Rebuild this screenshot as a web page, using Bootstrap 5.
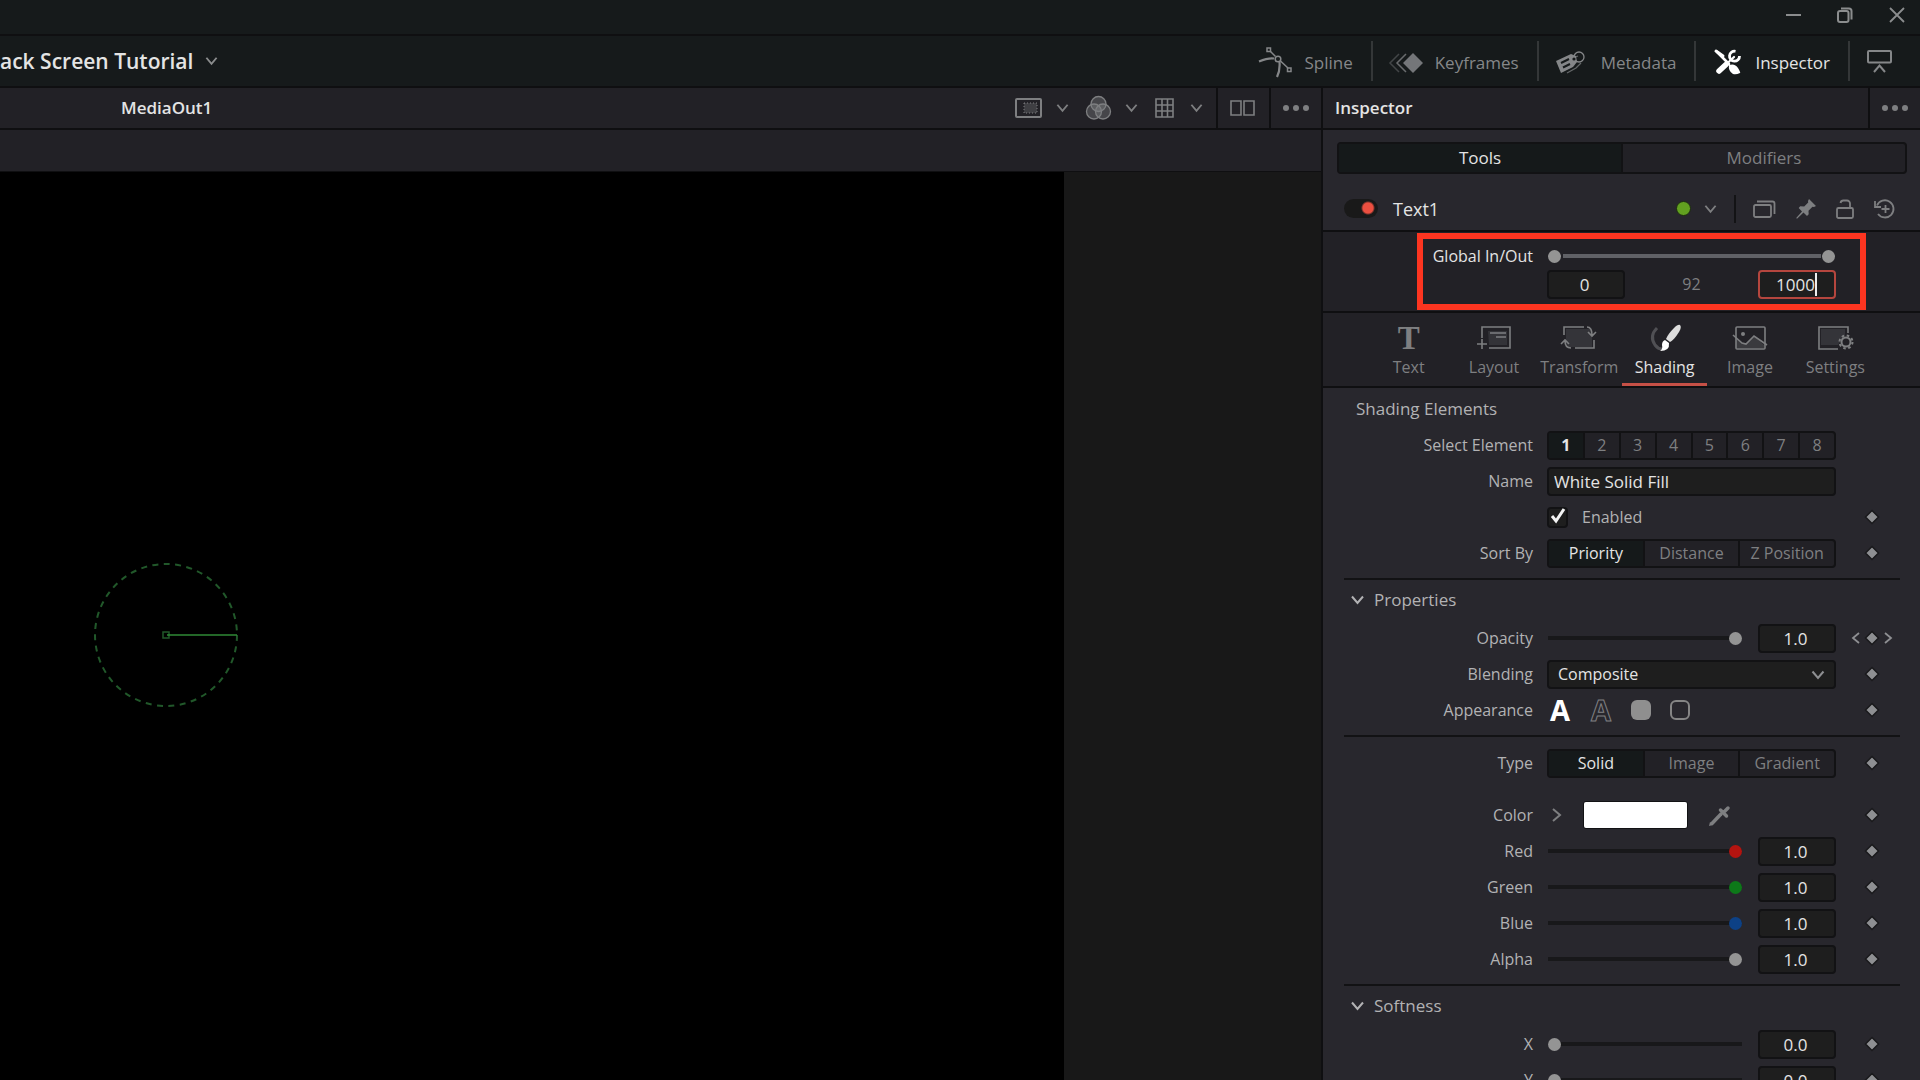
<!DOCTYPE html>
<html lang="en" data-bs-theme="dark">
<head>
<meta charset="utf-8">
<meta name="viewport" content="width=device-width, initial-scale=1">
<title>Inspector</title>
<link href="https://cdn.jsdelivr.net/npm/bootstrap@5.3.0/dist/css/bootstrap.min.css" rel="stylesheet">
<style>
:root{--top:#161a1b;--bar:#222126;--panel:#28272d;--rule:#0f0f11;--field:#1e1e1e;--muted:#7e7f81;--label:#b2b2b4;--bright:#e4e4e4;--accent:#c65046}
body{font-family:"Open Sans","Noto Sans",sans-serif;font-size:16px;line-height:24px;color:var(--label);background:var(--top);letter-spacing:normal}
button{font:inherit;color:inherit;background:none;border:0;padding:0}
svg{display:block;flex:none;overflow:visible}
.ico{fill:none;stroke:currentColor;stroke-width:2}
.fs17{font-size:17px}
.muted{color:var(--muted)}
.bright{color:var(--bright)}
.titlebar{height:36px;border-bottom:2px solid var(--rule);background:var(--top);padding:0 15px 5px 0;gap:36px;color:#8b8d8e}
.mainbar{height:52px;border-bottom:2px solid var(--rule);background:var(--top)}
.project{font-size:21px;font-weight:600;gap:12px}
.project svg{color:#8b8d8e}
.tool{height:40px;padding:3px 18px 0 17px;gap:12px;font-size:17px;color:#858789;border-left:2px solid #343738}
.tool:first-child{border-left:0}
.tool.wide{padding-right:28px}
.tool.current{padding-left:19px;gap:14px;color:#fff}
.panelhead{height:42px;border-bottom:2px solid var(--rule);background:var(--bar)}
.panelhead .cell{height:40px;border-left:2px solid var(--rule)}
.viewer{border-right:2px solid var(--rule)}
.caption{padding-left:121px}
.viewtools{gap:17px;padding-right:13px}
.viewtools button{gap:14px}
.split{width:53px;padding-left:12px}
.more{width:52px}
.subbar{height:42px;background:var(--bar);border-bottom:1px solid var(--rule)}
.stage{background:#181818}
.frame{width:1064px;background:#000}
.gizmo{left:90px;top:387px}
.inspector{width:597px;background:var(--panel)}
.seg{border:2px solid #121214;border-radius:4px;background:var(--bar);overflow:hidden}
.seg button{flex:1 1 0;color:var(--muted);border-left:2px solid #121214}
.seg button:first-child{border-left:0}
.seg .on{background:#15191a;color:var(--bright)}
.tabs2{height:32px;margin:12px 13px 13px 14px;font-size:17px;line-height:26px}
.node{height:43px;padding:0 25px 0 21px;font-size:18px}
.nodename{padding-left:15px}
.switch.form-check-input{width:34px;height:19px;margin:0;border:0;border-radius:10px;background:#191919 radial-gradient(circle at 24px 9px,#ec4f40 5px,#ec4f4000 7px)}
.dot{width:15px;height:15px;border-radius:50%;background:#62a020;border:1px solid #1c2b10}
.vers{margin:0 17px 0 13px}
.nodetools{gap:20px;padding-left:17px}
.vbar{width:2px;height:28px;background:#131315}
.range2{height:83px;border-top:2px solid var(--rule);border-bottom:2px solid var(--rule);background:var(--bar);padding-top:12px}
.callout{left:94px;right:54px;top:1px;bottom:1px;border:6px solid #fd3520;pointer-events:none}
.prop{display:grid;grid-template-columns:210px 289px 44px;column-gap:14px;align-items:center;height:36px}
.prop>label,.prop>.lab{text-align:right}
.prop>:nth-child(3){justify-self:center;color:#8e8f92}
.range2 .prop{height:24px}
.range2 .vals{height:28px;margin:2px 0 0 224px;width:289px}
.num{width:78px;height:29px;flex:none;background:var(--field);border:2px solid #121214;border-radius:4px;color:var(--bright);text-align:center;font-size:17px;line-height:24px;padding:0 3px 0 0}
.txt{width:100%;text-align:left;padding-left:5px}
.hot{border-color:#b5463e}
.caret{left:268px;top:3px;width:2px;height:23px;background:#eee}
.slide{-webkit-appearance:none;appearance:none;width:194px;height:14px;margin:0 0 0 1px;background:linear-gradient(#18181a,#18181a) center/100% 4px no-repeat;color:#949494}
.slide::-webkit-slider-thumb{-webkit-appearance:none;width:13px;height:13px;border-radius:50%;background:currentColor;border:0}
.duo{height:14px}
.duo .slide{width:287px;position:absolute;left:0;top:0;background:none}
.duo .slide:first-child{background:linear-gradient(#606166,#606166) center/258px 4px no-repeat}
.tabrow{height:75px;border-bottom:2px solid var(--rule);background:var(--bar);padding:0 42px 0 43px}
.tabrow button{flex:1 1 0;color:var(--muted);border-bottom:3px solid transparent;padding-top:6px}
.tabrow .pic{height:28px;margin-bottom:3px}
.tabrow .on{color:var(--bright);border-color:var(--accent)}
.serifT{font:bold 33px/24px "Liberation Serif",serif}
.group{font-size:17px;height:39px;padding-left:33px;padding-top:9px}
.fold{font-size:17px;height:40px;margin-left:27px;gap:9px}
.rule{height:2px;background:#121214;margin:7px 20px 0 21px}
.seg28{height:29px}
.tick.form-check-input{width:21px;height:21px;margin:0;border:2px solid #121214;border-radius:4px;background-color:var(--field);background-image:none}
.tickbox svg{left:4px;top:3px;color:#f4f4f4;pointer-events:none}
.tickbox label{padding-left:14px}
.pick{width:100%;height:29px;appearance:none;border:2px solid #121214;border-radius:4px;background:var(--field);color:var(--bright);padding:0 9px;line-height:24px}
.pickwrap svg{right:11px;top:10px;color:#8e8f92;pointer-events:none}
.looks{gap:19px;padding-left:2px}
.glyph{width:22px;font-size:29px;line-height:28px;font-weight:700;text-align:center;color:#fff}
.hollow{color:#28272d;-webkit-text-stroke:1px #808083}
.box{width:20px;height:20px;border-radius:6px;background:#8f8f8f}
.box.open{background:none;border:2px solid #858585}
.swatch{width:105px;height:28px;padding:0;border:1px solid #121214;border-radius:3px;background:#fff;appearance:none}
.swatch::-webkit-color-swatch-wrapper{padding:0}
.swatch::-webkit-color-swatch{border:0}
.expand{margin:0 21px 0 5px}
.dropper{margin-left:21px}
.red{color:#b31410}.green{color:#0d7819}.blue{color:#0d4186}
</style>
<script src="https://cdn.jsdelivr.net/npm/bootstrap@5.3.0/dist/js/bootstrap.bundle.min.js"></script>
</head>
<body class="vh-100 overflow-hidden d-flex flex-column">
<svg width="0" height="0" class="position-absolute">
 <symbol id="down" viewBox="0 0 14 10"><path d="M1.500 1.500 7 8l5.500-6.500" fill="none" stroke="currentColor" stroke-width="2"/></symbol>
 <symbol id="dia" viewBox="0 0 16 16"><path d="M8 1.500 14.500 8 8 14.500 1.500 8z" fill="currentColor" stroke="#19191b" stroke-width="1.500"/></symbol>
 <symbol id="dots" viewBox="0 0 26 6"><g fill="currentColor"><circle cx="3" cy="3" r="3"/><circle cx="13" cy="3" r="3"/><circle cx="23" cy="3" r="3"/></g></symbol>
</svg>

<div class="titlebar d-flex justify-content-end align-items-center flex-shrink-0">
 <button aria-label="Minimize"><svg class="ico" width="15" height="16"><path d="M0 8h15"/></svg></button>
 <button aria-label="Restore"><svg class="ico" width="16" height="16"><rect x="1" y="4" width="10.500" height="11" rx="2"/><path d="M4 1.500h8a2.500 2.500 0 0 1 2.500 2.500v8.500"/></svg></button>
 <button aria-label="Close"><svg class="ico" width="16" height="16"><path d="M1 1l14 14M15 1 1 15" stroke-width="1.800"/></svg></button>
</div>

<header class="mainbar d-flex justify-content-between align-items-center flex-shrink-0">
 <button class="project bright d-flex align-items-center"><span>ack Screen Tutorial</span><svg width="13" height="10"><use href="#down"/></svg></button>
 <nav class="d-flex align-items-center">
  <button class="tool d-flex align-items-center"><svg class="ico" width="34" height="32"><g stroke-width="1.500"><path d="M1 14.500C7 12 12 11 16 11.500M21.500 15C22 21 21.500 25 19 30" stroke-width="2.200"/><path d="M12 4l5.500 5.500M22.500 14 30 21"/><circle cx="20" cy="12" r="2.800"/><rect x="9" y="1" width="3.500" height="3.500"/><rect x="29.500" y="21" width="3.500" height="3.500"/></g></svg>Spline</button>
  <button class="tool d-flex align-items-center ps-3"><svg width="34" height="22"><g fill="none" stroke="currentColor" stroke-width="1.500"><path d="M10 2 1 11l9 9" opacity=".4"/><path d="M17 2 8 11l9 9" opacity=".75"/></g><path d="M24 1 34 11 24 21 14 11z" fill="currentColor" opacity=".85"/></svg>Keyframes</button>
  <button class="tool d-flex align-items-center"><svg width="29" height="24"><path d="M0 10 15 3l5 2 1 6-4 5-12 6z" fill="currentColor"/><path d="M5 12l8-4M7 16.500l7-3.500" stroke="#161a1b" stroke-width="2"/><g fill="none" stroke="currentColor" stroke-width="1.300"><circle cx="23" cy="6" r="5"/><path d="M11 22l9-5 5-5M17 7l5-2" opacity=".7"/></g><circle cx="18" cy="8" r="1.600" fill="#161a1b"/></svg><span class="ps-1">Metadata</span></button>
  <button class="tool current d-flex align-items-center" aria-pressed="true"><svg width="26" height="25"><g fill="none" stroke="#fff" stroke-linecap="round"><path d="M2 2 14 14" stroke-width="2.600"/><path d="M1 1l7 5" stroke-width="3"/><path d="M4 21 11 14.500" stroke-width="5.500"/><path d="M11 14.500 19 7" stroke-width="2.200"/><path d="M20.500 1.300a5 5 0 1 0 4 4.700" stroke-width="2.800" stroke-linecap="butt"/></g><path d="M14 15q6-2 9 3t2 5q-4 2-7 1-5-3-4-9z" fill="#fff"/></svg><span class="bright">Inspector</span></button>
  <button class="tool wide d-flex align-items-center" aria-label="Expand panel"><svg class="ico" width="25" height="26"><rect x="1" y="1" width="23" height="11.500" rx="1"/><path d="M7 22l5.500-6.500L18 22"/></svg></button>
 </nav>
</header>

<main class="d-flex flex-fill overflow-hidden">
 <section class="viewer d-flex flex-column flex-fill">
  <div class="panelhead d-flex align-items-center justify-content-between flex-shrink-0">
   <div class="caption fs17 fw-semibold bright">MediaOut1</div>
   <div class="d-flex align-items-center muted">
    <div class="viewtools d-flex align-items-center">
     <button class="d-flex align-items-center" aria-label="Region of interest"><svg class="ico" width="27" height="20"><rect x="1" y="1" width="25" height="18" rx="1"/><path d="M9 5h13v10H9z" stroke-width="1" stroke-dasharray="1 2" fill="#3f3f43"/></svg><svg width="13" height="10"><use href="#down"/></svg></button>
     <button class="d-flex align-items-center" aria-label="Channels"><svg width="25" height="24"><g fill="currentColor" fill-opacity=".4" stroke="currentColor" stroke-width="1.300"><circle cx="12.500" cy="8" r="7.500"/><circle cx="8" cy="15.500" r="7.500"/><circle cx="17" cy="15.500" r="7.500"/></g></svg><svg width="13" height="10"><use href="#down"/></svg></button>
     <button class="d-flex align-items-center" aria-label="Grid"><svg class="ico" width="21" height="20"><path d="M1 1h17v18H1zM7 1v18M12.500 1v18M1 7h17M1 13h17" stroke-width="1.600"/></svg><svg width="13" height="10"><use href="#down"/></svg></button>
    </div>
    <button class="cell split" aria-label="Split view"><svg class="ico" width="25" height="16"><path d="M1 1h10v14H1zM14 1h10v14H14z" stroke-width="1.600"/></svg></button>
    <button class="cell more d-flex align-items-center justify-content-center" aria-label="Options"><svg width="26" height="6"><use href="#dots"/></svg></button>
   </div>
  </div>
  <div class="subbar flex-shrink-0"></div>
  <div class="stage flex-fill d-flex">
   <div class="frame position-relative">
    <svg class="gizmo position-absolute" width="152" height="152" fill="none" stroke="#21582a"><circle cx="76" cy="76" r="71" stroke-width="2" stroke-dasharray="6 5.440"/><rect x="73" y="73" width="6" height="6" stroke-width="1.500"/><path d="M77 76h70" stroke="#2f8a36" stroke-width="1.600"/></svg>
   </div>
  </div>
 </section>

 <aside class="inspector flex-shrink-0">
  <div class="panelhead d-flex align-items-center justify-content-between">
   <div class="fs17 fw-semibold bright ps-2 ms-1">Inspector</div>
   <button class="cell more muted d-flex align-items-center justify-content-center" aria-label="Options"><svg width="26" height="6"><use href="#dots"/></svg></button>
  </div>
  <div class="seg tabs2 d-flex"><button class="on">Tools</button><button>Modifiers</button></div>
  <div class="node d-flex align-items-center bright">
   <input type="checkbox" class="switch form-check-input" id="enable" checked>
   <label for="enable" class="nodename flex-fill">Text1</label>
   <div class="d-flex align-items-center muted">
    <span class="dot"></span>
    <button class="vers" aria-label="Versions"><svg width="13" height="10"><use href="#down"/></svg></button>
    <span class="vbar"></span>
    <div class="nodetools d-flex align-items-center">
     <button aria-label="Stack"><svg class="ico" width="23" height="18"><g stroke-width="1.800"><rect x="1" y="5" width="17" height="12" rx="1.500"/><path d="M4 1.500h15.500a2 2 0 0 1 2 2V14"/></g></svg></button>
     <button aria-label="Pin"><svg width="20" height="20"><path d="M13 0l7 7-2 1-1.500-.2-4 4 .2 3.500-1.700 1.700-3.500-3.500L1 19.800.200 19 6 12.500 2.700 9l1.500-1.700 4 .2 4-4L12 2z" fill="currentColor"/></svg></button>
     <button aria-label="Lock"><svg class="ico" width="18" height="20"><g stroke-width="1.800"><rect x="1" y="9" width="16" height="10" rx="1.500"/><path d="M14 9V4.500a3 3 0 0 0-3-3H7.500a3 3 0 0 0-3 2.500"/></g></svg></button>
     <button aria-label="Reset"><svg class="ico" width="21" height="20"><path d="M3 6.500A8.600 8.600 0 1 1 4 15M1 2v6h6M11.500 6v8M7.500 10h8" stroke-width="1.800"/></svg></button>
    </div>
   </div>
  </div>
  <div class="range2 position-relative">
   <div class="prop"><label for="gin" class="bright">Global In/Out</label><div class="duo position-relative"><input class="slide" type="range" min="0" max="1000" value="0" id="gin"><input class="slide" type="range" min="0" max="1000" value="1000" aria-label="Global out"></div></div>
   <div class="vals position-relative d-flex align-items-center justify-content-between"><input class="num" value="0" aria-label="In"><span class="muted">92</span><input class="num hot" value="1000" aria-label="Out"><span class="caret position-absolute"></span></div>
   <div class="callout position-absolute"></div>
  </div>
  <nav class="tabrow d-flex">
   <button><div class="pic d-flex justify-content-center align-items-center serifT">T</div>Text</button>
   <button><div class="pic d-flex justify-content-center align-items-center"><svg class="ico" width="34" height="24"><g stroke-width="1.600"><path d="M5 12V1h28v21H12"/><path d="M11 5h19v14H12z" fill="#333338" stroke="none"/><path d="M13 7h16M19 11h10M0 18h10M5 13v10"/></g></svg></div>Layout</button>
   <button><div class="pic d-flex justify-content-center align-items-center"><svg class="ico" width="36" height="24"><g stroke-width="1.600"><path d="M5 3h26v18H5z" fill="#343439" stroke="none"/><path d="M3 9V1h20M26 1q5 0 5 8M27 6l4 4 4-4M33 14v8H14M10 22q-6 0-6-7M0 18l4-4 4 4"/></g></svg></div>Transform</button>
   <button class="on"><div class="pic d-flex justify-content-center align-items-center"><svg width="30" height="28"><path d="M7 4Q-1 12 5 21q3 4 7 4" fill="none" stroke="#505054" stroke-width="3"/><path d="M30 1q2 2-1 7-5 8-9 10l-4-3q2-5 8-11 4-4 6-3z" fill="#ddd"/><path d="M15 16l4 3q1 8-9 8 3-2 2-6 0-4 3-5z" fill="#fff"/></svg></div>Shading</button>
   <button><div class="pic d-flex justify-content-center align-items-center"><svg class="ico" width="34" height="24"><g stroke-width="1.600"><path d="M3 12 9 17l4 1 8-8 10 9v3H3z" fill="#3a3a3e" stroke="none"/><rect x="3" y="1" width="29" height="22" rx="1"/><path d="M0 9l9 8 4 1 8-8 13 9"/><circle cx="10" cy="8" r="2" fill="currentColor" stroke="none"/></g></svg></div>Image</button>
   <button><div class="pic d-flex justify-content-center align-items-center"><svg class="ico" width="35" height="24"><g stroke-width="1.600"><path d="M3 3h24v6l-7 10H3z" fill="#343439" stroke="none"/><path d="M30 7V1H1v22h19"/><circle cx="28" cy="16" r="4.500" stroke-width="2"/><circle cx="28" cy="16" r="6.500" stroke-width="2" stroke-dasharray="2.550 2.550"/></g></svg></div>Settings</button>
  </nav>

  <div class="group">Shading Elements</div>
  <div class="prop"><span class="lab">Select Element</span><div class="seg seg28 d-flex"><button class="on fw-bold">1</button><button>2</button><button>3</button><button>4</button><button>5</button><button>6</button><button>7</button><button>8</button></div></div>
  <div class="prop"><label for="nm">Name</label><input class="num txt" id="nm" value="White Solid Fill"></div>
  <div class="prop"><span></span><div class="tickbox position-relative d-flex align-items-center"><input type="checkbox" class="tick form-check-input" id="en" checked><svg class="ico position-absolute" width="14" height="15"><path d="M1 8l4 5L13 1" stroke-width="3"/></svg><label for="en">Enabled</label></div><svg width="16" height="16"><use href="#dia"/></svg></div>
  <div class="prop"><span class="lab">Sort By</span><div class="seg seg28 d-flex"><button class="on">Priority</button><button>Distance</button><button>Z Position</button></div><svg width="16" height="16"><use href="#dia"/></svg></div>
  <div class="rule"></div>
  <button class="fold d-flex align-items-center"><svg width="15" height="10"><use href="#down"/></svg>Properties</button>
  <div class="prop"><label for="op">Opacity</label><div class="d-flex align-items-center justify-content-between"><input class="slide" type="range" id="op" value="100"><input class="num" value="1.0" aria-label="Opacity value"></div><svg width="42" height="16"><path d="M8 3 2 8l6 5M34 3l6 5-6 5" fill="none" stroke="currentColor" stroke-width="1.800"/><use href="#dia" x="13" width="16" height="16"/></svg></div>
  <div class="prop"><label for="bl">Blending</label><div class="pickwrap position-relative"><select class="pick d-block" id="bl"><option>Composite</option></select><svg class="position-absolute" width="14" height="10"><use href="#down"/></svg></div><svg width="16" height="16"><use href="#dia"/></svg></div>
  <div class="prop"><span class="lab">Appearance</span><div class="looks d-flex align-items-center"><button class="glyph">A</button><button class="glyph hollow">A</button><button class="box" aria-label="Fill"></button><button class="box open" aria-label="Border"></button></div><svg width="16" height="16"><use href="#dia"/></svg></div>
  <div class="rule mb-2"></div>
  <div class="prop"><span class="lab">Type</span><div class="seg seg28 d-flex"><button class="on">Solid</button><button>Image</button><button>Gradient</button></div><svg width="16" height="16"><use href="#dia"/></svg></div>
  <div class="prop mt-3"><label for="col">Color</label><div class="d-flex align-items-center"><button class="expand muted" aria-label="Expand"><svg width="10" height="14" class="ico"><path d="M1 1l7 6-7 6"/></svg></button><input type="color" class="swatch" id="col" value="#ffffff"><button class="dropper muted" aria-label="Pick color"><svg width="22" height="22"><path d="M3 19.500 12 10" stroke="currentColor" stroke-width="3.500" stroke-linecap="round"/><path d="M11.500 6l6 6M14.500 8.500 19 4" stroke="currentColor" stroke-width="3.500" stroke-linecap="round"/><path d="M0 22l1-4 3 3z" fill="currentColor"/></svg></button></div><svg width="16" height="16"><use href="#dia"/></svg></div>
  <div class="prop"><label for="r">Red</label><div class="d-flex align-items-center justify-content-between"><input class="slide red" type="range" id="r" value="100"><input class="num" value="1.0" aria-label="Red value"></div><svg width="16" height="16"><use href="#dia"/></svg></div>
  <div class="prop"><label for="g">Green</label><div class="d-flex align-items-center justify-content-between"><input class="slide green" type="range" id="g" value="100"><input class="num" value="1.0" aria-label="Green value"></div><svg width="16" height="16"><use href="#dia"/></svg></div>
  <div class="prop"><label for="b">Blue</label><div class="d-flex align-items-center justify-content-between"><input class="slide blue" type="range" id="b" value="100"><input class="num" value="1.0" aria-label="Blue value"></div><svg width="16" height="16"><use href="#dia"/></svg></div>
  <div class="prop"><label for="a">Alpha</label><div class="d-flex align-items-center justify-content-between"><input class="slide" type="range" id="a" value="100"><input class="num" value="1.0" aria-label="Alpha value"></div><svg width="16" height="16"><use href="#dia"/></svg></div>
  <div class="rule"></div>
  <button class="fold d-flex align-items-center"><svg width="15" height="10"><use href="#down"/></svg>Softness</button>
  <div class="prop"><label for="sx">X</label><div class="d-flex align-items-center justify-content-between"><input class="slide" type="range" id="sx" value="0"><input class="num" value="0.0" aria-label="X value"></div><svg width="16" height="16"><use href="#dia"/></svg></div>
  <div class="prop"><label for="sy">Y</label><div class="d-flex align-items-center justify-content-between"><input class="slide" type="range" id="sy" value="0"><input class="num" value="0.0" aria-label="Y value"></div><svg width="16" height="16"><use href="#dia"/></svg></div>
 </aside>
</main>
</body>
</html>
